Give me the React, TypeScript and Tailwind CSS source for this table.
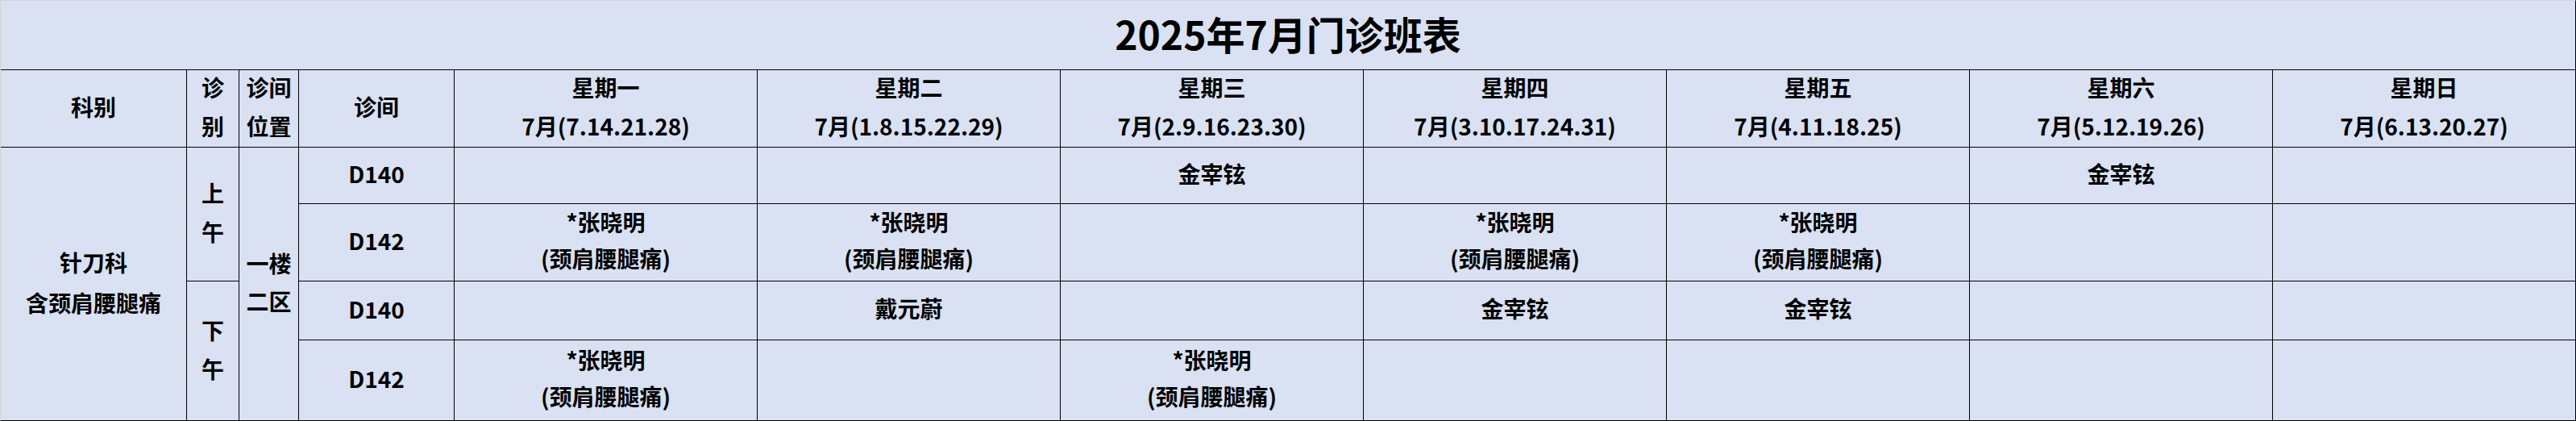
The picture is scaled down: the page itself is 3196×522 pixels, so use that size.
import React from "react";

const days = [
  { name: "星期一", dates: "7月(7.14.21.28)" },
  { name: "星期二", dates: "7月(1.8.15.22.29)" },
  { name: "星期三", dates: "7月(2.9.16.23.30)" },
  { name: "星期四", dates: "7月(3.10.17.24.31)" },
  { name: "星期五", dates: "7月(4.11.18.25)" },
  { name: "星期六", dates: "7月(5.12.19.26)" },
  { name: "星期日", dates: "7月(6.13.20.27)" },
];

const ZHANG = ["*张晓明", "(颈肩腰腿痛)"];
const JIN = ["金宰铉"];

// one entry per room row, one slot per weekday
const rows: { room: string; slots: (string[] | null)[] }[] = [
  { room: "D140", slots: [null, null, JIN, null, null, JIN, null] },
  { room: "D142", slots: [ZHANG, ZHANG, null, ZHANG, ZHANG, null, null] },
  { room: "D140", slots: [null, ["戴元蔚"], null, JIN, JIN, null, null] },
  { room: "D142", slots: [ZHANG, null, ZHANG, null, null, null, null] },
];

const cell =
  "flex flex-col items-center justify-center text-center bg-[#d9e1f2] pb-[5px]";

function Lines({ lines, leading }: { lines: string[]; leading: string }) {
  return (
    <div className={leading}>
      {lines.map((l, i) => (
        <div key={i}>{l}</div>
      ))}
    </div>
  );
}

export default function App() {
  return (
    <div
      className="w-[3196px] h-[522px] border-t border-l border-[#d4d4d4] border-r border-b border-r-black border-b-black text-black font-bold text-[28px]"
      style={{ fontFamily: '"Noto Sans CJK SC", "Noto Sans", sans-serif' }}
    >
      <div className="grid grid-cols-[230px_64px_73px_192px_repeat(7,375px)] grid-rows-[85px_95px_69px_95px_72px_99px] gap-px bg-black">
        <div className={`${cell} col-span-11 text-[48px] leading-none`}>
          2025年7月门诊班表
        </div>

        <div className={cell}>科别</div>
        <div className={cell}>
          <Lines lines={["诊", "别"]} leading="leading-[48px]" />
        </div>
        <div className={cell}>
          <Lines lines={["诊间", "位置"]} leading="leading-[48px]" />
        </div>
        <div className={cell}>诊间</div>
        {days.map((d) => (
          <div key={d.name} className={cell}>
            <Lines lines={[d.name, d.dates]} leading="leading-[48px]" />
          </div>
        ))}

        {rows.map((r, ri) => (
          <React.Fragment key={ri}>
            {ri === 0 && (
              <div className={`${cell} row-span-4`}>
                <Lines lines={["针刀科", "含颈肩腰腿痛"]} leading="leading-[50px]" />
              </div>
            )}
            {ri % 2 === 0 && (
              <div className={`${cell} row-span-2`}>
                <Lines
                  lines={ri === 0 ? ["上", "午"] : ["下", "午"]}
                  leading="leading-[48px]"
                />
              </div>
            )}
            {ri === 0 && (
              <div className={`${cell} row-span-4`}>
                <Lines lines={["一楼", "二区"]} leading="leading-[47px]" />
              </div>
            )}
            <div className={cell}>{r.room}</div>
            {r.slots.map((s, si) => (
              <div key={si} className={cell}>
                {s && <Lines lines={s} leading="leading-[45px]" />}
              </div>
            ))}
          </React.Fragment>
        ))}
      </div>
    </div>
  );
}
